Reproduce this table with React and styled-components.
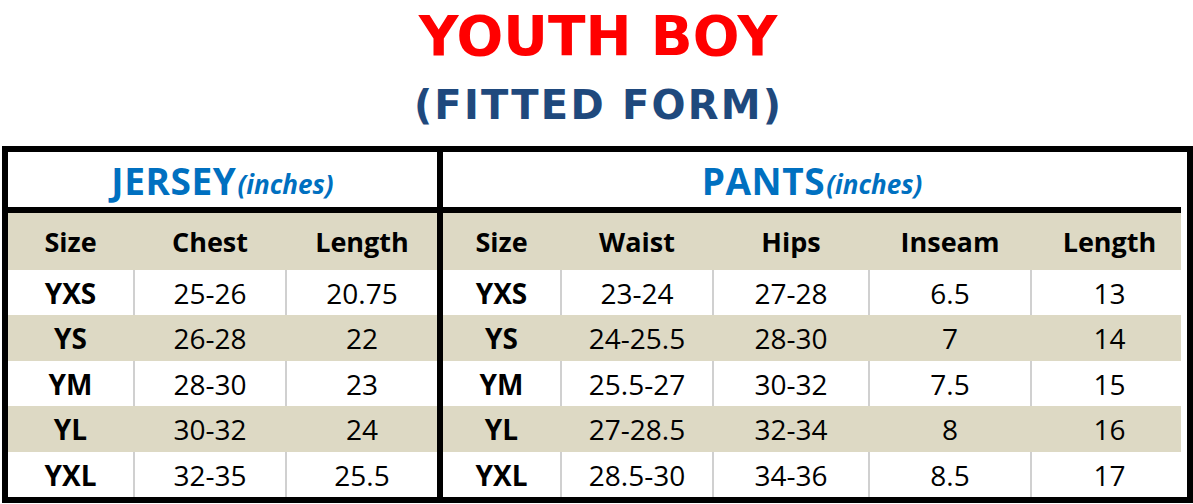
import React from 'react';
import styled, { createGlobalStyle } from 'styled-components';

const GlobalStyle = createGlobalStyle`
  html, body {
    margin: 0;
    padding: 0;
    background: #fff;
  }
  * { box-sizing: border-box; }
`;

const Page = styled.div`
  width: 1193px;
  height: 504px;
  overflow: hidden;
  background: #fff;
`;

const Heading = styled.header`
  display: flex;
  flex-direction: column;
  align-items: center;
  font-family: "DejaVu Sans", Verdana, sans-serif;
  font-weight: bold;
  padding-top: 9px;
  height: 146px;
`;

const MainTitle = styled.h1`
  margin: 0;
  font-size: 55px;
  line-height: 55px;
  color: #ff0000;
  padding-left: 3px;
`;

const SubTitle = styled.h2`
  margin: 21px 0 0;
  font-size: 40px;
  line-height: 40px;
  letter-spacing: 2.2px;
  color: #1f497d;
  padding-left: 4px;
`;

const Chart = styled.div`
  display: flex;
  margin-left: 2px;
  width: 1191px;
  border: 6px solid #000;
  font-family: "Open Sans", "Noto Sans", sans-serif;
  color: #000;
`;

const Panel = styled.section`
  width: ${p => p.$width}px;
  flex: none;
  border-left: ${p => (p.$divider ? '6px solid #000' : 'none')};
`;

const PanelTitle = styled.div`
  height: 61px;
  border-bottom: 6px solid #000;
  display: flex;
  align-items: center;
  justify-content: center;
  color: #0070c0;
  font-weight: 700;
  font-size: 37px;
  letter-spacing: 0.6px;
  padding-top: 2px;
`;

const Unit = styled.span`
  font-style: italic;
  font-size: 26px;
  letter-spacing: 0;
  margin-left: 1px;
  padding-top: 6px;
`;

const Row = styled.div`
  display: grid;
  grid-template-columns: ${p => p.$cols};
  height: ${p => p.$height}px;
  background: ${p => (p.$shaded ? '#ddd9c4' : '#fff')};
`;

const Cell = styled.div`
  display: flex;
  align-items: center;
  justify-content: center;
  font-size: ${p => (p.$head ? 27 : 28)}px;
  font-weight: ${p => (p.$bold ? 700 : 400)};
  border-left: 2px solid ${p => (p.$line ? '#d0d0d0' : 'transparent')};
  &:first-child { border-left: none; }
`;

const jersey = {
  title: 'JERSEY',
  width: 429,
  cols: '125px 152px 152px',
  head: ['Size', 'Chest', 'Length'],
  rows: [
    ['YXS', '25-26', '20.75'],
    ['YS', '26-28', '22'],
    ['YM', '28-30', '23'],
    ['YL', '30-32', '24'],
    ['YXL', '32-35', '25.5'],
  ],
};

const pants = {
  title: 'PANTS',
  width: 744,
  cols: '117px 152px 156px 162px 157px',
  head: ['Size', 'Waist', 'Hips', 'Inseam', 'Length'],
  rows: [
    ['YXS', '23-24', '27-28', '6.5', '13'],
    ['YS', '24-25.5', '28-30', '7', '14'],
    ['YM', '25.5-27', '30-32', '7.5', '15'],
    ['YL', '27-28.5', '32-34', '8', '16'],
    ['YXL', '28.5-30', '34-36', '8.5', '17'],
  ],
};

const rowHeights = [45, 46, 45, 46, 45];

function SizePanel({ data, divider }) {
  return (
    <Panel $width={data.width} $divider={divider}>
      <PanelTitle>
        {data.title}
        <Unit>(inches)</Unit>
      </PanelTitle>
      <Row $cols={data.cols} $height={57} $shaded>
        {data.head.map(h => (
          <Cell key={h} $head $bold>{h}</Cell>
        ))}
      </Row>
      {data.rows.map((r, i) => {
        const shaded = i % 2 === 1;
        return (
          <Row key={r[0]} $cols={data.cols} $height={rowHeights[i]} $shaded={shaded}>
            {r.map((v, j) => (
              <Cell key={j} $bold={j === 0} $line={!shaded}>{v}</Cell>
            ))}
          </Row>
        );
      })}
    </Panel>
  );
}

export default function App() {
  return (
    <Page>
      <GlobalStyle />
      <Heading>
        <MainTitle>YOUTH BOY</MainTitle>
        <SubTitle>(FITTED FORM)</SubTitle>
      </Heading>
      <Chart>
        <SizePanel data={jersey} />
        <SizePanel data={pants} divider />
      </Chart>
    </Page>
  );
}
